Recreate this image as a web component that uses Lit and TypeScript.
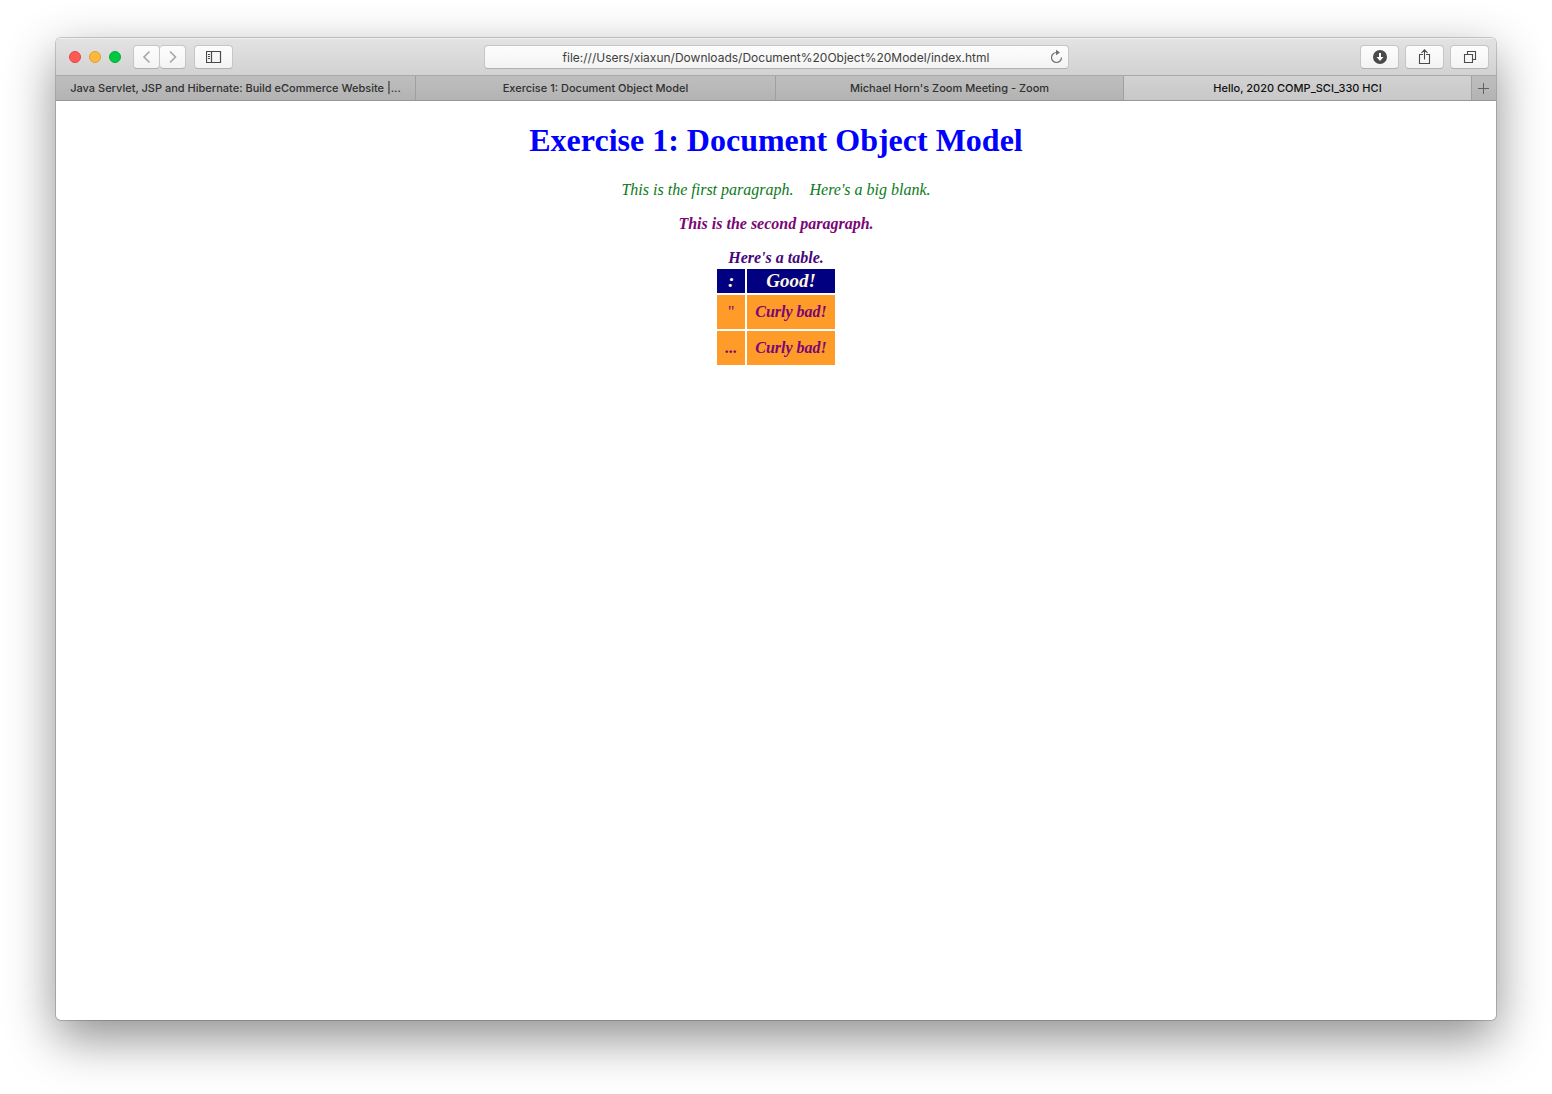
import { LitElement, html, css, svg, TemplateResult } from "lit";
import { customElement, property } from "lit/decorators.js";

const icon = (size: number, body: TemplateResult) =>
  html`<svg width=${size} height=${size} viewBox="0 0 ${size} ${size}" fill="none" stroke="currentColor" aria-hidden="true">${body}</svg>`;

const back = icon(16, svg`<path d="M10.5 2.5 5 8l5.5 5.5" stroke-width="1.6"/>`);
const forward = icon(16, svg`<path d="M5 2.5 10.5 8 5 13.5" stroke-width="1.6"/>`);
const sidebar = icon(16, svg`<path d="M.5 2.5h14v11H.5zM5.5 2.5v11" stroke-width="1.2"/><path d="M2 5.5h2M2 7.5h2M2 9.5h2" stroke-width="1"/>`);
const download = icon(16, svg`<circle cx="8" cy="8" r="7" fill="currentColor" stroke="none"/><path d="M8 4v5" stroke="#fff" stroke-width="2"/><path d="M4.5 8h7L8 12z" fill="#fff" stroke="none"/>`);
const share = icon(16, svg`<path d="M6 5.5H2.5v9h10v-9H9M7.5 10.5V1M4.5 3.8l3-3 3 3" stroke-width="1.1"/>`);
const tabsIcon = icon(16, svg`<path d="M2.5 5.5h8v8h-8zM5.5 5.5v-3h8v8h-3" stroke-width="1.1"/>`);
const reload = icon(16, svg`<path d="M8.5 3.5A5 5 0 1 0 13.5 8.5" stroke-width="1.2"/><path d="M8 .8 12 3.500 8 6.2z" fill="currentColor" stroke="none"/>`);
const plus = icon(12, svg`<path d="M5.5 1v11M0 6.5h11"/>`);

@customElement("browser-toolbar")
export class BrowserToolbar extends LitElement {
  @property() address = "";

  static styles = css`
    :host {
      display: grid;
      grid-template-columns: minmax(0, 1fr) minmax(0, 585px) minmax(0, 1fr);
      align-items: center;
      height: 37px;
      border-bottom: 1px solid #a9a9a9;
      background: linear-gradient(#e3e3e3, #d2d2d2);
      box-shadow: inset 0 1px #f0f0f0;
      color: #4a4a4a;
      font: 12px/16px Inter, "Liberation Sans", sans-serif;
    }
    .group { display: flex; align-items: center; }
    .start { padding-left: 13px; }
    .end { justify-content: flex-end; gap: 6px; padding-right: 7px; }
    .lights { display: flex; gap: 8px; margin-right: 12px; }
    .light {
      box-sizing: border-box;
      width: 12px;
      height: 12px;
      padding: 0;
      border: 1px solid #e2463f;
      border-radius: 50%;
      background: #ff5a54;
    }
    .minimise { border-color: #e0a033; background: #ffb83b; }
    .zoom { border-color: #00ae35; background: #00c840; }
    .button {
      box-sizing: border-box;
      display: flex;
      align-items: center;
      justify-content: center;
      width: 39px;
      height: 24px;
      padding: 0;
      border: 1px solid #c6c6c6;
      border-bottom-color: #b1b1b1;
      border-radius: 4px;
      background: linear-gradient(#fdfdfd, #f3f3f3);
      color: inherit;
    }
    .history { display: flex; margin-right: 8px; }
    .history .button { width: 27px; color: #a5a5a5; }
    .history .button:last-child { border-left: 0; width: 26px; }
    .field {
      box-sizing: border-box;
      display: flex;
      align-items: center;
      height: 24px;
      padding-left: 24px;
      border: 1px solid #c6c6c6;
      border-bottom-color: #b1b1b1;
      border-radius: 4px;
      background: linear-gradient(#fdfdfd, #f3f3f3);
    }
    .address {
      flex: 1;
      min-width: 0;
      padding: 2px 0 0;
      border: 0;
      outline: 0;
      background: none;
      color: #404040;
      font: inherit;
      text-align: center;
    }
    .reload {
      display: flex;
      justify-content: center;
      width: 24px;
      padding: 0;
      border: 0;
      background: none;
      color: #707070;
    }
  `;

  render() {
    return html`
      <div class="group start">
        <div class="lights">
          <button class="light" aria-label="Close"></button>
          <button class="light minimise" aria-label="Minimise"></button>
          <button class="light zoom" aria-label="Zoom"></button>
        </div>
        <div class="history">
          <button class="button" aria-label="Back">${back}</button>
          <button class="button" aria-label="Forward">${forward}</button>
        </div>
        <button class="button" aria-label="Sidebar">${sidebar}</button>
      </div>
      <div class="field">
        <input class="address" aria-label="Address" .value=${this.address} />
        <button class="reload" aria-label="Reload">${reload}</button>
      </div>
      <div class="group end">
        <button class="button" aria-label="Downloads">${download}</button>
        <button class="button" aria-label="Share">${share}</button>
        <button class="button" aria-label="Tab overview">${tabsIcon}</button>
      </div>
    `;
  }
}

@customElement("browser-tabs")
export class BrowserTabs extends LitElement {
  @property({ attribute: false }) tabs: string[] = [];

  static styles = css`
    :host {
      display: grid;
      grid-template-columns: minmax(0, 30fr) minmax(0, 30fr) minmax(0, 29fr) minmax(0, 29fr) 24px;
      height: 24px;
      border-bottom: 1px solid #999;
    }
    .tab, .add {
      border: 0;
      background: linear-gradient(#bebebe, #b3b3b3);
      color: #303030;
    }
    .tab {
      padding: 0 4px;
      border-right: 1px solid #a0a0a0;
      overflow: hidden;
      text-overflow: ellipsis;
      white-space: nowrap;
      font: 500 11px/24px Inter, "Liberation Sans", sans-serif;
    }
    .active { background: linear-gradient(#d2d2d2, #c8c8c8); color: #101010; }
    .add { display: flex; align-items: center; justify-content: center; padding: 0; color: #606060; }
  `;

  render() {
    return html`
      ${this.tabs.map((t, i) => html`<button class="tab ${i === this.tabs.length - 1 ? "active" : ""}">${t}</button>`)}
      <button class="add" aria-label="New tab">${plus}</button>
    `;
  }
}

@customElement("exercise-page")
export class ExercisePage extends LitElement {
  static styles = css`
    :host {
      display: block;
      padding: 21px 8px;
      font: 16px/18px "Liberation Serif", serif;
      text-align: center;
    }
    .title { margin: 0 0 22px; color: #00f; font-size: 32px; line-height: 37px; }
    .text { margin: 0 0 16px; font-style: italic; }
    .first { color: #0b7a1a; }
    .second { color: #7a0675; font-weight: bold; }
    .table {
      margin: 0 auto;
      border-spacing: 2px;
      font-style: italic;
      font-weight: bold;
      color: #7a0675;
    }
    .caption { color: #45067c; }
    .head { padding: 1px; background: #000080; color: #fff5dc; font-size: 19px; line-height: 22px; }
    .cell { padding: 8px; background: #ff9b28; }
    .plain { font-style: normal; font-weight: normal; }
  `;

  render() {
    return html`
      <h1 class="title">Exercise 1: Document Object Model</h1>
      <p class="text first">This is the first paragraph.\u00a0\u00a0\u00a0\u00a0Here's a big blank.</p>
      <p class="text second">This is the second paragraph.</p>
      <table class="table">
        <caption class="caption">Here's a table.</caption>
        <thead>
          <tr><th class="head">:</th><th class="head">Good!</th></tr>
        </thead>
        <tbody>
          <tr><td class="cell plain">''</td><td class="cell">Curly bad!</td></tr>
          <tr><td class="cell">...</td><td class="cell">Curly bad!</td></tr>
        </tbody>
      </table>
    `;
  }
}

@customElement("app-root")
export class AppRoot extends LitElement {
  static styles = css`
    :host {
      box-sizing: border-box;
      display: flex;
      min-height: 100vh;
      padding: 38px 56px 74px;
      overflow: hidden;
      background: #fff;
    }
    .window {
      flex: 1;
      min-width: 0;
      border-radius: 5px;
      background: #fff;
      box-shadow: 0 0 0 1px rgba(0, 0, 0, 0.18), 0 18px 50px rgba(0, 0, 0, 0.45);
    }
    .chrome { border-radius: 5px 5px 0 0; overflow: hidden; }
  `;

  render() {
    return html`
      <main class="window">
        <div class="chrome">
          <browser-toolbar address="file:///Users/xiaxun/Downloads/Document%20Object%20Model/index.html"></browser-toolbar>
          <browser-tabs
            .tabs=${[
              "Java Servlet, JSP and Hibernate: Build eCommerce Website |...",
              "Exercise 1: Document Object Model",
              "Michael Horn's Zoom Meeting - Zoom",
              "Hello, 2020 COMP_SCI_330 HCI",
            ]}
          ></browser-tabs>
        </div>
        <exercise-page></exercise-page>
      </main>
    `;
  }
}
